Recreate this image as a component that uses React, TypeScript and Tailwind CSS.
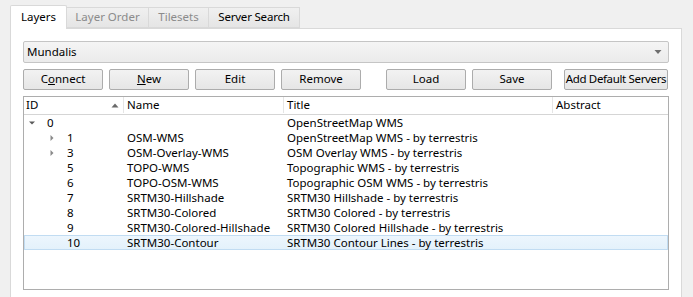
import React from "react";

const rows = [
  { id: "0", name: "", title: "OpenStreetMap WMS", depth: 0, arrow: "down" },
  { id: "1", name: "OSM-WMS", title: "OpenStreetMap WMS - by terrestris", depth: 1, arrow: "right" },
  { id: "3", name: "OSM-Overlay-WMS", title: "OSM Overlay WMS - by terrestris", depth: 1, arrow: "right" },
  { id: "5", name: "TOPO-WMS", title: "Topographic WMS - by terrestris", depth: 1, arrow: "" },
  { id: "6", name: "TOPO-OSM-WMS", title: "Topographic OSM WMS - by terrestris", depth: 1, arrow: "" },
  { id: "7", name: "SRTM30-Hillshade", title: "SRTM30 Hillshade - by terrestris", depth: 1, arrow: "" },
  { id: "8", name: "SRTM30-Colored", title: "SRTM30 Colored - by terrestris", depth: 1, arrow: "" },
  { id: "9", name: "SRTM30-Colored-Hillshade", title: "SRTM30 Colored Hillshade - by terrestris", depth: 1, arrow: "" },
  { id: "10", name: "SRTM30-Contour", title: "SRTM30 Contour Lines - by terrestris", depth: 1, arrow: "", selected: true },
];

function Arrow({ dir }: { dir: string }) {
  if (dir === "down")
    return (
      <svg width="8" height="8" viewBox="0 0 8 8" className="shrink-0">
        <path d="M1 2.5 L7 2.5 L4 5.5 Z" fill="#5a5a5a" />
      </svg>
    );
  if (dir === "right")
    return (
      <svg width="8" height="8" viewBox="0 0 8 8" className="shrink-0">
        <path d="M2.5 1 L5.5 4 L2.5 7 Z" fill="#8a8a8a" />
      </svg>
    );
  return <span className="w-[8px] shrink-0" />;
}

function Button({ children, w = "w-[80px]" }: { children: React.ReactNode; w?: string }) {
  return (
    <div
      className={`${w} h-[21px] pb-[1px] flex items-center justify-center whitespace-nowrap rounded-[2px] border border-[#acacac] bg-gradient-to-b from-[#f2f2f2] to-[#e6e6e6] text-[11.5px] text-black`}
    >
      {children}
    </div>
  );
}

export default function App() {
  return (
    <div
      className="w-[693px] h-[297px] overflow-hidden bg-[#f0f0f0] pl-[10px] pt-[4px] text-[11.5px]"
      style={{ fontFamily: '"Noto Sans", "Open Sans", sans-serif' }}
    >
      {/* tabs */}
      <div className="flex items-end h-[24px] relative z-10">
        <div className="w-[57px] h-[24px] mb-[-1px] pb-[2px] border border-b-0 border-[#d9d9d9] bg-white rounded-t-[2px] flex items-center justify-center text-black">
          Layers
        </div>
        <div className="w-[82px] h-[21px] pb-[1px] border border-l-0 border-[#d9d9d9] bg-gradient-to-b from-[#f0f0f0] to-[#e5e5e5] flex items-center justify-center text-[#8b8b8b]">
          Layer Order
        </div>
        <div className="w-[60px] h-[21px] pb-[1px] border border-l-0 border-[#d9d9d9] bg-gradient-to-b from-[#f0f0f0] to-[#e5e5e5] flex items-center justify-center text-[#8b8b8b]">
          Tilesets
        </div>
        <div className="w-[91px] h-[21px] pb-[1px] border border-l-0 border-[#d9d9d9] bg-gradient-to-b from-[#f0f0f0] to-[#e5e5e5] flex items-center justify-center text-black tracking-[-0.2px]">
          Server Search
        </div>
      </div>

      {/* panel */}
      <div className="w-[672px] h-[280px] border border-[#d9d9d9] bg-white pl-[12px] pt-[12px]">
        <div className="w-[646px] h-[22px] pb-[1px] rounded-[2px] border border-[#c5c5c5] bg-gradient-to-b from-[#f5f5f5] to-[#ebebeb] flex items-center justify-between pl-[3px] pr-[6px] text-black">
          <span>Mundalis</span>
          <svg width="8" height="6" viewBox="0 0 8 6">
            <path d="M0.5 1 L7.5 1 L4 5 Z" fill="#6e6e6e" />
          </svg>
        </div>

        <div className="flex mt-[6px] w-[646px]">
          <Button>
            C<span className="underline">o</span>nnect
          </Button>
          <div className="ml-[6px]">
            <Button>
              <span className="underline">N</span>ew
            </Button>
          </div>
          <div className="ml-[6px]">
            <Button>Edit</Button>
          </div>
          <div className="ml-[6px]">
            <Button>Remove</Button>
          </div>
          <div className="ml-[25px]">
            <Button>Load</Button>
          </div>
          <div className="ml-[6px]">
            <Button>Save</Button>
          </div>
          <div className="ml-[12px]">
            <Button w="w-[104px] tracking-[-0.35px]">Add Default Servers</Button>
          </div>
        </div>

        {/* tree table */}
        <div className="mt-[6px] w-[646px] h-[194px] border border-[#adadad] bg-white text-black">
          <div className="flex h-[18px] pb-[1px] border-b border-[#d5d5d5] bg-white">
            <div className="w-[100px] border-r border-[#e5e5e5] flex items-center justify-between pl-[2px] pr-[4px]">
              <span>ID</span>
              <svg width="8" height="5" viewBox="0 0 8 5">
                <path d="M0.5 4.5 L7.5 4.5 L4 0.5 Z" fill="#6a6a6a" />
              </svg>
            </div>
            <div className="w-[160px] border-r border-[#e5e5e5] flex items-center pl-[3px]">Name</div>
            <div className="w-[269px] border-r border-[#e5e5e5] flex items-center pl-[3px]">Title</div>
            <div className="flex-1 flex items-center pl-[3px]">Abstract</div>
          </div>
          {rows.map((r) => (
            <div
              key={r.id}
              className={`flex h-[15px] items-center leading-[15px] ${
                r.selected ? "shadow-[inset_0_0_0_1px_#c1dcf2] bg-gradient-to-b from-[#edf6fd] to-[#e3f1fb]" : ""
              }`}
            >
              <div className="w-[100px] flex items-center pl-[4px]">
                <div className={r.depth === 1 ? "w-[20px] shrink-0" : "w-[0px]"} />
                <Arrow dir={r.arrow} />
                <span className="ml-[11px]">{r.id}</span>
              </div>
              <div className="w-[160px] pl-[3px] whitespace-nowrap">{r.name}</div>
              <div className="w-[269px] pl-[3px] whitespace-nowrap">{r.title}</div>
              <div className="flex-1" />
            </div>
          ))}
        </div>
      </div>
    </div>
  );
}
